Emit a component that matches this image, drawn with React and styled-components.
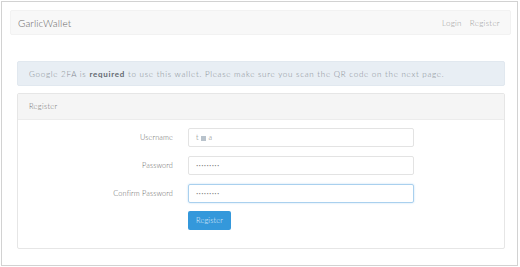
import React from 'react'
import styled, { createGlobalStyle } from 'styled-components'

const GlobalStyle = createGlobalStyle`
  html, body {
    margin: 0;
    padding: 0;
    background: #ffffff;
  }
  body {
    font-family: Lato, "Open Sans", sans-serif;
    font-weight: 300;
    color: #777;
  }
`

function App() {
  return (
    <Page>
      <GlobalStyle />
      <Frame>
        <Navbar>
          <Brand>GarlicWallet</Brand>
          <NavLinks>
            <NavLink>Login</NavLink>
            <NavLink>Register</NavLink>
          </NavLinks>
        </Navbar>
        <Container>
          <Alert>
            Google 2FA is <strong>required</strong> to use this wallet. Please make sure you scan the QR code on the next page.
          </Alert>
          <Panel>
            <PanelHeading>Register</PanelHeading>
            <PanelBody>
              <FormRow>
                <Label>Username</Label>
                <Field>
                  t<Blot />a
                </Field>
              </FormRow>
              <FormRow>
                <Label>Password</Label>
                <Field dots>•••••••••</Field>
              </FormRow>
              <FormRow>
                <Label>Confirm Password</Label>
                <Field dots focused>•••••••••</Field>
              </FormRow>
              <FormRow>
                <span />
                <Actions>
                  <Button>Register</Button>
                </Actions>
              </FormRow>
            </PanelBody>
          </Panel>
        </Container>
      </Frame>
    </Page>
  )
}

export default App

const Page = styled.div`
  width: 520px;
  height: 267px;
  padding: 1px;
  box-sizing: border-box;
`

const Frame = styled.div`
  width: 517px;
  height: 265px;
  box-sizing: border-box;
  border: 1px solid #d2d2d2;
  padding: 8px 6px 0 8px;
`

const Navbar = styled.div`
  height: 25px;
  background: #f8f8f8;
  border: 1px solid #f2f2f2;
  border-radius: 2px;
  box-sizing: border-box;
  display: flex;
  align-items: center;
  justify-content: space-between;
  padding: 0 10px 0 7px;
`

const Brand = styled.div`
  font-size: 10px;
  color: #666;
  font-weight: 300;
  letter-spacing: 0.1px;
`

const NavLinks = styled.div`
  display: flex;
  gap: 8px;
`

const NavLink = styled.span`
  font-size: 8px;
  letter-spacing: 0.3px;
  color: #9a9a9a;
`

const Container = styled.div`
  padding: 26px 6px 0 7px;
`

const Alert = styled.div`
  height: 25px;
  box-sizing: border-box;
  background: #e8eef4;
  border: 1px solid #e1e8ef;
  border-radius: 2px;
  display: flex;
  align-items: center;
  white-space: pre;
  padding: 0 11px;
  font-size: 8px;
  letter-spacing: 0.73px;
  color: #858b92;

  strong {
    font-weight: 700;
    color: #646a71;
  }
`

const Panel = styled.div`
  margin-top: 7px;
  height: 156px;
  box-sizing: border-box;
  border: 1px solid #e6e6e6;
  border-radius: 2px;
`

const PanelHeading = styled.div`
  height: 25px;
  background: #f5f5f5;
  border-bottom: 1px solid #ececec;
  display: flex;
  align-items: center;
  padding: 0 11px;
  font-size: 7.5px;
  letter-spacing: 0.3px;
  color: #707070;
`

const PanelBody = styled.div`
  padding: 8px 0 0 0;
  display: flex;
  flex-direction: column;
  gap: 9px;
`

const FormRow = styled.div`
  display: grid;
  grid-template-columns: 155px 226px;
  column-gap: 15px;
  align-items: center;
`

const Label = styled.div`
  text-align: right;
  font-size: 7.3px;
  letter-spacing: 0.15px;
  color: #666;
`

const Field = styled.div`
  height: 19px;
  box-sizing: border-box;
  border: 1px solid ${props => (props.focused ? '#a9d0ee' : '#e3e3e3')};
  box-shadow: ${props => (props.focused ? '0 0 2px rgba(102, 175, 233, 0.45)' : 'none')};
  border-radius: 2px;
  display: flex;
  align-items: center;
  padding: 0 7px;
  font-size: ${props => (props.dots ? '4px' : '7.3px')};
  letter-spacing: ${props => (props.dots ? '0.3px' : '0')};
  color: #777;
`

const Blot = styled.span`
  display: inline-block;
  width: 5px;
  height: 5px;
  margin: 2px 3px 0 2px;
  background: #b9c3cc;
`

const Actions = styled.div`
  display: flex;
  margin-top: -1px;
`

const Button = styled.div`
  display: flex;
  align-items: center;
  justify-content: center;
  width: 43px;
  height: 19px;
  border-radius: 2px;
  background: #3498db;
  color: #e8f3fb;
  font-size: 7.3px;
  letter-spacing: 0.2px;
`
